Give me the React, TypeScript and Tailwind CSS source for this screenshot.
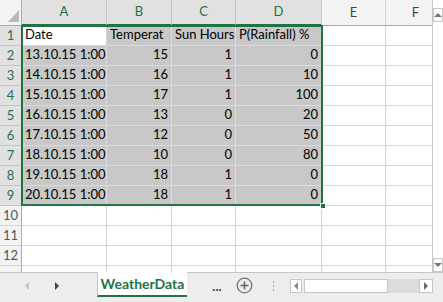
import React from "react";

const data: string[][] = [
  ["Date", "Temperat", "Sun Hours", "P(Rainfall) %"],
  ["13.10.15 1:00", "15", "1", "0"],
  ["14.10.15 1:00", "16", "1", "10"],
  ["15.10.15 1:00", "17", "1", "100"],
  ["16.10.15 1:00", "13", "0", "20"],
  ["17.10.15 1:00", "12", "0", "50"],
  ["18.10.15 1:00", "10", "0", "80"],
  ["19.10.15 1:00", "18", "1", "0"],
  ["20.10.15 1:00", "18", "1", "0"],
];

const widths = ["w-[85px]", "w-[65px]", "w-[64px]", "w-[86px]", "w-[64px]", "w-[60px]"];
const letters = ["A", "B", "C", "D", "E", "F"];

function HeaderRow() {
  return (
    <div className="flex h-[26px] shrink-0">
      <div className="relative w-[22px] shrink-0 bg-[#f3f3f3] border-r border-b border-[#ababab]">
        <svg className="absolute left-0 top-0" width="22" height="26" viewBox="0 0 22 26">
          <polygon points="8,22 19,22 19,10" fill="#b9b9b9" />
        </svg>
      </div>
      {letters.map((l, i) => {
        const sel = i < 4;
        return (
          <div
            key={l}
            className={`${widths[i]} shrink-0 flex items-center justify-center text-[13px] border-r ${
              sel
                ? "bg-[#e1e1e1] text-[#217346] border-[#c6c6c6] border-b-2 border-b-[#217346]"
                : "bg-[#f3f3f3] text-[#444] border-[#d4d4d4] border-b border-b-[#ababab]"
            }`}
          >
            {l}
          </div>
        );
      })}
    </div>
  );
}

function DataRow({ n }: { n: number }) {
  const row = data[n - 1];
  const selRow = n <= 9;
  return (
    <div className="flex h-[20px] shrink-0">
      <div
        className={`w-[22px] shrink-0 flex items-center justify-center text-[13px] border-r border-b ${
          selRow ? "bg-[#e1e1e1] text-[#217346] border-[#c6c6c6] border-r-[#ababab]" : "bg-[#f3f3f3] text-[#555] border-[#d4d4d4] border-r-[#ababab]"
        }`}
      >
        {n <= 12 ? n : ""}
      </div>
      {letters.map((l, i) => {
        const inSel = selRow && i < 4;
        const active = n === 1 && i === 0;
        const val = row && i < 4 ? row[i] : "";
        const numeric = n > 1 && i > 0;
        return (
          <div
            key={l}
            className={`${widths[i]} shrink-0 overflow-hidden whitespace-nowrap flex items-end pb-[1px] text-[13px] text-black border-r border-b ${
              numeric ? "justify-end pr-[3px]" : "justify-start pl-[3px]"
            } ${
              active
                ? "bg-white border-[#d4d4d4]"
                : inSel
                ? "bg-[#c8c8c8] border-[#dcdcdc]"
                : "bg-white border-[#d4d4d4]"
            }`}
          >
            {val}
          </div>
        );
      })}
    </div>
  );
}

function Tri({ dir, color }: { dir: "l" | "r" | "u" | "d"; color: string }) {
  const pts =
    dir === "l" ? "5,0 5,8 1,4" : dir === "r" ? "1,0 1,8 5,4" : dir === "u" ? "0,5 8,5 4,1" : "0,1 8,1 4,5";
  const w = dir === "l" || dir === "r" ? 6 : 8;
  const h = dir === "l" || dir === "r" ? 8 : 6;
  return (
    <svg width={w} height={h} viewBox={`0 0 ${w} ${h}`}>
      <polygon points={pts} fill={color} />
    </svg>
  );
}

export default function App() {
  return (
    <div className="w-[443px] h-[302px] flex flex-col bg-white overflow-hidden font-['Lato',sans-serif]">
      <div className="flex h-[272px] shrink-0">
        <div className="relative w-[433px] shrink-0 overflow-hidden flex flex-col border-r border-[#c6c6c6]">
          <HeaderRow />
          {Array.from({ length: 13 }, (_, i) => (
            <DataRow key={i} n={i + 1} />
          ))}
          <div className="absolute left-[21px] top-[25px] w-[302px] h-[181px] border-2 border-[#217346] pointer-events-none" />
          <div className="absolute left-[320px] top-[203px] w-[6px] h-[6px] bg-[#217346] border border-white" />
        </div>
        <div className="w-[10px] shrink-0 flex flex-col justify-between bg-white pt-[8px]">
          <div className="h-[14px] flex items-center justify-center border border-[#c6c6c6] bg-white">
            <Tri dir="u" color="#777" />
          </div>
          <div className="h-[14px] flex items-center justify-center border border-[#c6c6c6] bg-white">
            <Tri dir="d" color="#777" />
          </div>
        </div>
      </div>
      <div className="flex h-[30px] shrink-0 bg-[#ededed] border-t border-[#c6c6c6]">
        <div className="w-[97px] shrink-0 flex items-center pl-[24px] gap-[24px] pb-[4px]">
          <Tri dir="l" color="#c4c4c4" />
          <Tri dir="r" color="#444" />
        </div>
        <div className="w-[90px] shrink-0 h-[25px] -mt-[1px] bg-white border-b-2 border-[#217346] border-l border-l-[#c6c6c6] flex items-center justify-center text-[14px] font-bold text-[#217346]">
          WeatherData
        </div>
        <div className="w-[46px] shrink-0 flex items-center justify-center pl-[14px] pb-[2px] text-[13px] font-bold text-[#444]">
          ...
        </div>
        <div className="w-[23px] shrink-0 flex items-center justify-center pb-[4px]">
          <svg width="17" height="17" viewBox="0 0 17 17">
            <circle cx="8.5" cy="8.5" r="7.3" fill="none" stroke="#777" strokeWidth="1.3" />
            <line x1="8.5" y1="4.5" x2="8.5" y2="12.5" stroke="#666" strokeWidth="1.6" />
            <line x1="4.5" y1="8.5" x2="12.5" y2="8.5" stroke="#666" strokeWidth="1.6" />
          </svg>
        </div>
        <div className="w-[34px] shrink-0 flex flex-col items-center justify-center gap-[2px] pb-[4px]">
          <div className="w-[1px] h-[2px] bg-[#aaa]" />
          <div className="w-[1px] h-[2px] bg-[#aaa]" />
          <div className="w-[1px] h-[2px] bg-[#aaa]" />
        </div>
        <div className="flex items-start pt-[6px] w-[143px] shrink-0">
          <div className="w-[12px] h-[14px] shrink-0 bg-white border border-[#c6c6c6] flex items-center justify-center">
            <Tri dir="l" color="#888" />
          </div>
          <div className="w-[84px] h-[14px] shrink-0 ml-[2px] bg-white border border-[#c6c6c6]" />
          <div className="flex-1 h-[14px] bg-[#dcdcdc]" />
          <div className="w-[14px] h-[14px] shrink-0 bg-white border border-[#c6c6c6] flex items-center justify-center">
            <Tri dir="r" color="#666" />
          </div>
        </div>
      </div>
    </div>
  );
}
